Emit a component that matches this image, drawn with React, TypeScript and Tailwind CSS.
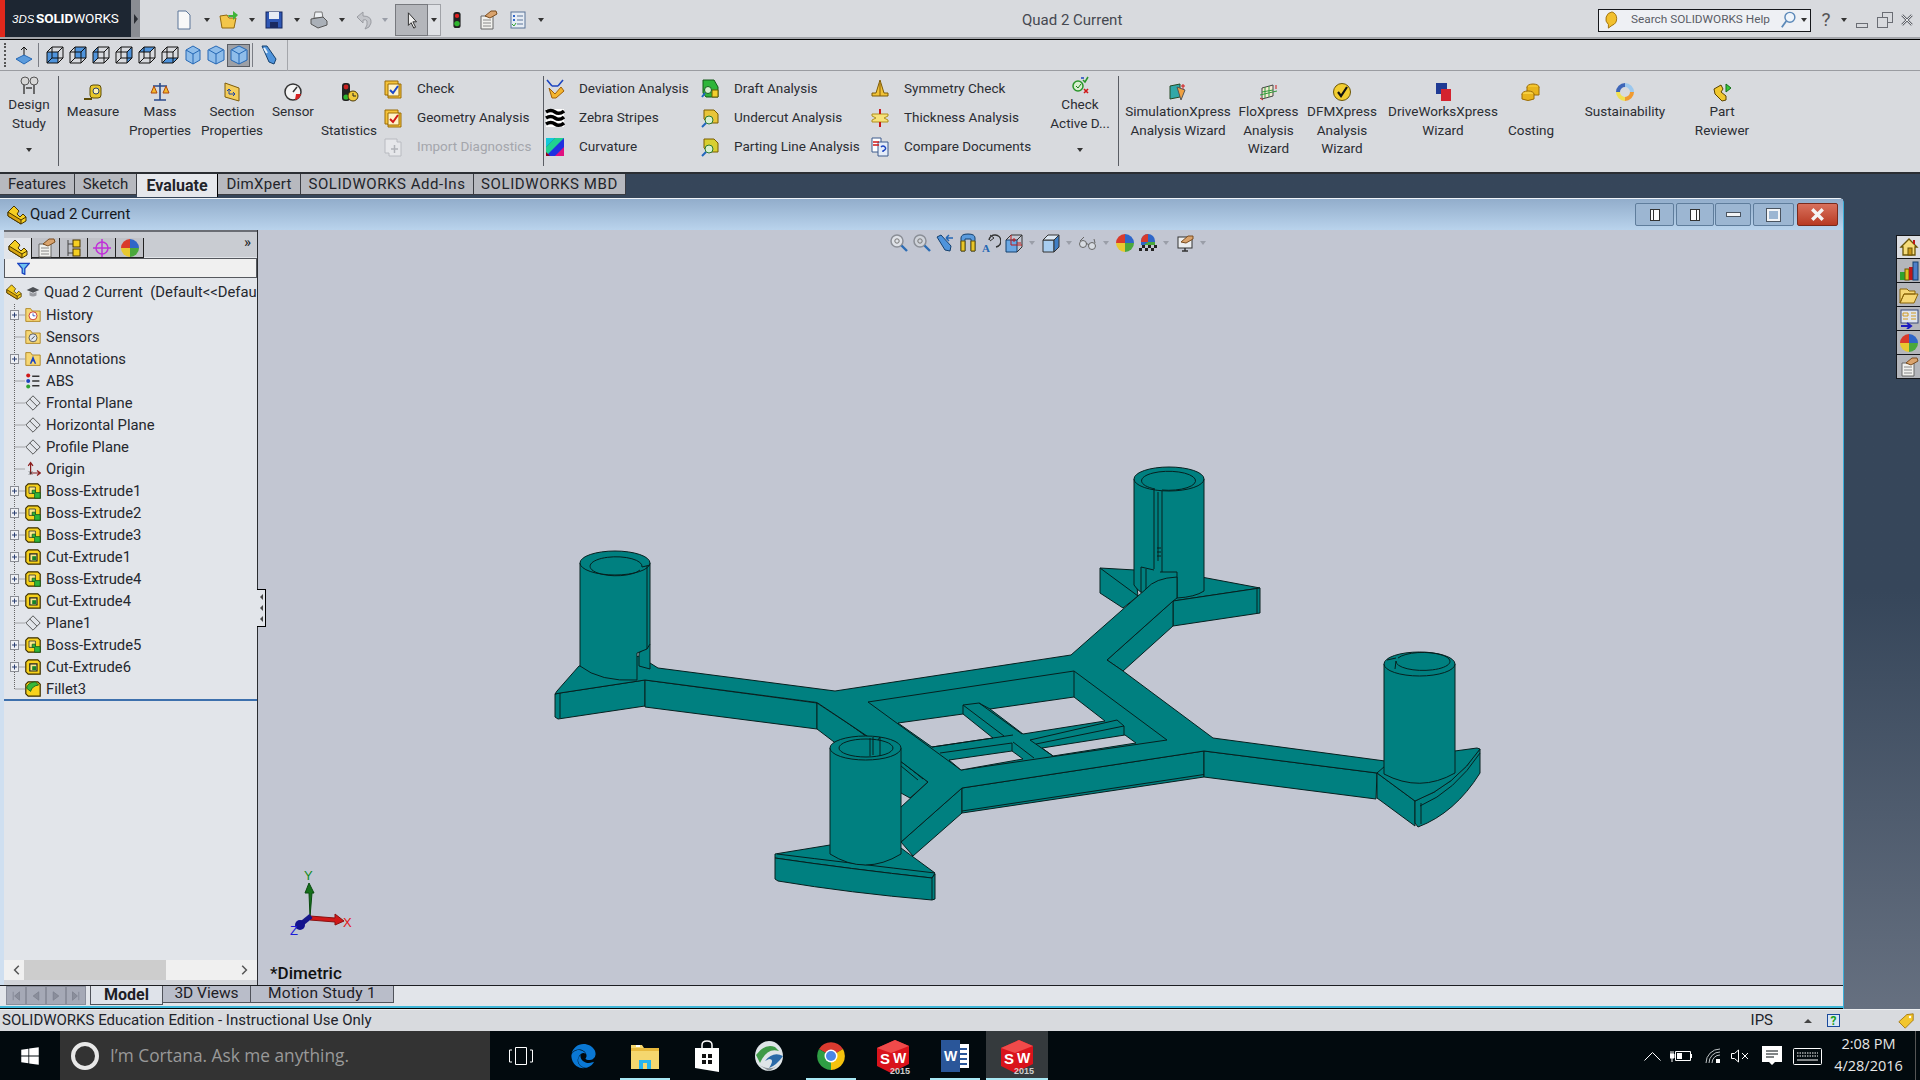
import type { ReactNode } from 'react';
import { FaEdge, FaWindows } from 'react-icons/fa';

const TEAL = '#008080';
const VIEW_BG = '#c2c6d2';

function Svg({ s = 20, children }: { s?: number; children: ReactNode }) {
  return (
    <svg width={s} height={s} viewBox="0 0 20 20" className="shrink-0">
      {children}
    </svg>
  );
}

function Caret({ light }: { light?: boolean }) {
  return (
    <div
      className={
        light
          ? 'w-0 h-0 border-x-[3.5px] border-t-[4px] border-x-transparent border-t-[#9a9ea8]'
          : 'w-0 h-0 border-x-[3.5px] border-t-[4px] border-x-transparent border-t-[#333]'
      }
    />
  );
}

function Ball({ s = 18 }: { s?: number }) {
  return (
    <Svg s={s}>
      <path d="M10 10V1A9 9 0 0 0 1 10Z" fill="#d93a2b" />
      <path d="M10 10V1A9 9 0 0 1 19 10Z" fill="#2f66c8" />
      <path d="M10 10H19A9 9 0 0 1 10 19Z" fill="#4aa83c" />
      <path d="M10 10H1A9 9 0 0 0 10 19Z" fill="#e8c830" />
    </Svg>
  );
}

function Cube({ face }: { face: string }) {
  const faces: Record<string, string> = {
    front: '2,7 13,7 13,18 2,18',
    right: '13,7 18,2 18,13 13,18',
    top: '2,7 7,2 18,2 13,7',
    back: '7,2 18,2 18,13 7,13',
    left: '2,7 7,2 7,13 2,18',
    bottom: '2,18 7,13 18,13 13,18',
  };
  return (
    <Svg>
      <polygon points={faces[face]} fill="#4f94dc" />
      <g fill="none" stroke="#111" strokeWidth="1">
        <path d="M2 7H13V18H2ZM2 7L7 2H18L13 7M18 2V13L13 18M7 2V13H18M7 13L2 18" />
      </g>
    </Svg>
  );
}

function Iso({ narrow }: { narrow?: boolean }) {
  return (
    <Svg>
      <polygon
        points={narrow ? '10,1 17,5 17,15 10,19 3,15 3,5' : '10,1 18,5 18,15 10,19 2,15 2,5'}
        fill="#8fbdea"
        stroke="#2467b4"
      />
      <path d="M3 5L10 9L17 5M10 9V19" stroke="#2467b4" fill="none" />
    </Svg>
  );
}

function FolderIcon({ children }: { children?: ReactNode }) {
  return (
    <Svg s={16}>
      <path d="M1 5V2H7L9 5H19V18H1Z" fill="#f6d774" stroke="#a67a12" />
      {children}
    </Svg>
  );
}

function FeatureIcon({ kind }: { kind: 'boss' | 'cut' | 'fillet' }) {
  return (
    <Svg s={16}>
      <path d="M4 1H16L19 4V19H4L1 16V4Z" fill="#f7d21c" stroke="#3a2c00" strokeWidth="1.5" />
      {kind === 'boss' && (
        <>
          <path d="M5 5H13V13H5Z" fill="#f9e88a" stroke="#333" />
          <path d="M9 9L13 9V12H19V19H12V13H9Z" fill="#2fb53a" stroke="#135a18" />
        </>
      )}
      {kind === 'cut' && (
        <>
          <path d="M6 6H15V15H6Z" fill="#f9e88a" stroke="#222" strokeWidth="1.5" />
          <path d="M9 9H14V14H9Z" fill="#16822a" />
        </>
      )}
      {kind === 'fillet' && <path d="M2 9Q3 2 13 1L17 5Q9 6 7 13Z" fill="#36b83a" stroke="#135a18" />}
    </Svg>
  );
}

function PartIcon({ s = 16 }: { s?: number }) {
  return (
    <Svg s={s}>
      <path d="M1 7L7 1L12 6L10 9L13 12L16 9L19 12V16L14 19L1 11Z" fill="#f5cf22" stroke="#4a3600" />
      <path d="M1 7V11L14 19V15ZM14 15L19 12" fill="#d8a510" stroke="#4a3600" />
    </Svg>
  );
}

function PlaneIcon() {
  return (
    <Svg s={16}>
      <path d="M10 1L19 10L10 19L1 10ZM6 5L15 14" fill="none" stroke="#333" />
    </Svg>
  );
}

function ClipHand({ s = 20 }: { s?: number }) {
  return (
    <Svg s={s}>
      <path d="M3 6H15V19H3Z" fill="#f1f1ee" stroke="#666" />
      <path d="M5 10H13M5 13H13M5 16H13" stroke="#888" />
      <path d="M7 6L13 1H18L19 4L12 8Z" fill="#d9a36d" stroke="#7a4d20" />
    </Svg>
  );
}

function TrafficLight({ s = 18 }: { s?: number }) {
  return (
    <Svg s={s}>
      <rect x="6" y="1" width="8" height="18" rx="3" fill="#222" />
      <circle cx="10" cy="5.5" r="2.4" fill="#e02020" />
      <circle cx="10" cy="14" r="3" fill="#2fb52f" />
    </Svg>
  );
}

function CheckBoxIcon({ color }: { color: string }) {
  return (
    <Svg>
      <path d="M2 2H15V5H18V19H5V16H2Z" fill="#f5c33b" stroke="#9b6c06" />
      <path d="M5 5H16V17H5Z" fill="#fff3c8" stroke="#9b6c06" />
      <path d="M7 11L10 14L15 7" fill="none" stroke={color} strokeWidth="2" />
    </Svg>
  );
}

function Zoomer({ fill }: { fill: string }) {
  return (
    <Svg>
      <circle cx="8" cy="8" r="6" fill={fill} stroke="#8b8f97" strokeWidth="1.5" />
      <circle cx="8" cy="8" r="2.2" fill="none" stroke="#777" />
      <path d="M12.5 12.5L18 18" stroke="#2c6db5" strokeWidth="2.4" />
    </Svg>
  );
}

function Lens({ body }: { body: string }) {
  return (
    <Svg>
      <path d="M4 2H14L18 6V15H8L4 11Z" fill={body} stroke="#7a5c00" />
      <circle cx="9" cy="12" r="4" fill="#d9efd2" stroke="#2c7a2c" />
      <path d="M6 15L2 19" stroke="#2166bd" strokeWidth="2" />
    </Svg>
  );
}

function Wizard({ a, b }: { a: string; b: string }) {
  return (
    <Svg>
      <path d="M2 4L12 2V15L2 17Z" fill={a} stroke="#264a26" />
      <path d="M9 5L17 8L13 18Z" fill={b} stroke="#555" />
      <path d="M15 2V7M13 4H17" stroke="#d01919" />
    </Svg>
  );
}

function SwIcon() {
  return (
    <svg width="40" height="40" viewBox="0 0 40 40">
      <polygon points="4,12 22,4 36,10 36,28 18,37 4,30" fill="#d9131b" />
      <polygon points="4,12 22,4 36,10 18,17" fill="#f04a4a" />
      <text x="7" y="28" fontSize="15" fontWeight="700" fill="#fff" fontFamily="'Liberation Sans',sans-serif">
        S
      </text>
      <text x="20" y="27" fontSize="14" fontWeight="700" fill="#fff" fontFamily="'Liberation Sans',sans-serif">
        W
      </text>
      <text x="17" y="38" fontSize="9" fontWeight="700" fill="#cfcfcf" fontFamily="'Liberation Sans',sans-serif">
        2015
      </text>
    </svg>
  );
}

const ribbonIcons: Record<string, ReactNode> = {
  design: (
    <Svg>
      <circle cx="6" cy="6" r="4" fill="#d8d8d8" stroke="#555" />
      <circle cx="15" cy="6" r="4" fill="#d8d8d8" stroke="#555" />
      <path d="M5 10V19M15 10V19M7 13H13" stroke="#444" strokeWidth="1.5" />
    </Svg>
  ),
  measure: (
    <Svg>
      <rect x="7" y="3" width="11" height="13" rx="3" fill="#e8c62a" stroke="#5d4c06" />
      <circle cx="13" cy="9" r="3" fill="#fff5b8" stroke="#2a3f70" />
      <path d="M1 17H9" stroke="#5d4c06" strokeWidth="2" />
    </Svg>
  ),
  mass: (
    <Svg>
      <path d="M10 1V18M3 4H17M4 18H16" stroke="#2a4a8a" strokeWidth="1.6" />
      <path d="M1 11H7L4 4ZM13 11H19L16 4Z" fill="#f2b92b" stroke="#b0470c" />
    </Svg>
  ),
  section: (
    <Svg>
      <path d="M3 1L17 6V19L3 15Z" fill="#f3cd5c" stroke="#7e5c0a" />
      <path d="M7 7V12H13M7 7L5 9M7 7L9 9M13 12L11 10M13 12L11 14" stroke="#1c44a8" fill="none" />
    </Svg>
  ),
  sensor: (
    <Svg>
      <circle cx="10" cy="10" r="8" fill="#f4f4f4" stroke="#333" strokeWidth="1.5" />
      <path d="M10 10L14 5" stroke="#333" strokeWidth="1.5" />
      <path d="M12 18A8 8 0 0 0 18 12L13 12Z" fill="#d62020" />
    </Svg>
  ),
  statistics: (
    <Svg>
      <rect x="3" y="1" width="8" height="18" rx="3" fill="#222" />
      <circle cx="7" cy="5" r="2.4" fill="#c92020" />
      <circle cx="7" cy="15" r="2.6" fill="#2fb52f" />
      <circle cx="14" cy="14" r="5" fill="#f0c93a" stroke="#4d3a06" />
      <path d="M14 11V14H17" stroke="#222" fill="none" />
    </Svg>
  ),
  checkBlue: <CheckBoxIcon color="#1c48c8" />,
  checkRed: <CheckBoxIcon color="#d01818" />,
  import: (
    <Svg>
      <path d="M2 2H14V5H18V19H6V16H2Z" fill="#e6e7ea" stroke="#b8bac0" />
      <path d="M8 12H15M11.500 8V16" stroke="#b0b2b8" strokeWidth="1.5" />
    </Svg>
  ),
  deviation: (
    <Svg>
      <path d="M4 9L10 15L16 8L19 12L11 19H7Z" fill="#f4b52e" stroke="#a1600a" />
      <path d="M2 1L7 7M18 1L13 7M7 7H13" stroke="#1c44c0" strokeWidth="1.6" />
    </Svg>
  ),
  zebra: (
    <Svg>
      <rect x="1" y="1" width="18" height="18" fill="#fff" />
      <path d="M1 4Q6 1 10 4T19 3M1 10Q6 7 10 10T19 9M1 16Q6 13 10 16T19 15" fill="none" stroke="#000" strokeWidth="3.5" />
    </Svg>
  ),
  curvature: (
    <Svg>
      <rect x="1" y="1" width="18" height="18" fill="#2030e0" />
      <polygon points="1,1 10,1 1,10" fill="#12c8d8" />
      <polygon points="1,10 10,1 19,1 1,19" fill="#20d090" />
      <polygon points="10,19 19,10 19,19" fill="#e01080" />
      <polygon points="1,19 1,15 5,19" fill="#900020" />
    </Svg>
  ),
  draft: (
    <Svg>
      <path d="M3 1H14L18 8V18H6L3 14Z" fill="#2fb53a" stroke="#145a18" />
      <path d="M12 11H18V18H12Z" fill="#f3d02d" stroke="#6d5a00" />
      <circle cx="8" cy="11" r="3.5" fill="#d9efd2" stroke="#14601e" />
      <path d="M5 14L2 18" stroke="#2166bd" strokeWidth="2" />
    </Svg>
  ),
  undercut: <Lens body="#e8c53a" />,
  parting: <Lens body="#d8cf30" />,
  symmetry: (
    <Svg>
      <path d="M10 1L14 14H18V17H2V14H6Z" fill="#f0c237" stroke="#7d5a06" />
      <path d="M10 4V17" stroke="#8a5a06" />
    </Svg>
  ),
  thickness: (
    <Svg>
      <path d="M2 6H18V8L14 10L18 12V14H2V12L6 10L2 8Z" fill="#f6e27a" stroke="#b0901c" />
      <path d="M10 1V6M10 19V14" stroke="#c81818" strokeWidth="2" />
    </Svg>
  ),
  compare: (
    <Svg>
      <path d="M2 1H11V15H2Z" fill="#fff" stroke="#3c5a8c" />
      <path d="M8 5H18V19H8Z" fill="#e4ecf8" stroke="#3c5a8c" />
      <path d="M3 5H9M3 8H9" stroke="#d01818" strokeWidth="1.6" />
      <path d="M11 10Q13 8 15 10T13 14V15" fill="none" stroke="#1c44c0" strokeWidth="1.5" />
    </Svg>
  ),
  checkActive: (
    <Svg>
      <circle cx="8" cy="11" r="5" fill="#d9f0d0" stroke="#2a962a" strokeWidth="1.5" />
      <path d="M6 11L8 13L11 9" fill="none" stroke="#1c7a1c" />
      <path d="M13 5L15 7L18 2" fill="none" stroke="#2a962a" strokeWidth="1.5" />
      <path d="M14 14L18 18M18 14L14 18" stroke="#d01818" strokeWidth="1.6" />
      <path d="M11 3H14" stroke="#1c44c0" strokeWidth="1.5" />
    </Svg>
  ),
  simulation: <Wizard a="#32a8a8" b="#f0a040" />,
  flo: (
    <Svg>
      <path d="M3 6L14 3V14L3 17Z" fill="#f2ead0" stroke="#444" />
      <path d="M6 5V16M10 4V15M3 10L14 8M1 13L18 9" stroke="#2f9a3a" />
      <path d="M17 3V7M1 16L4 18" stroke="#d01818" />
    </Svg>
  ),
  dfm: (
    <Svg>
      <circle cx="10" cy="10" r="8.500" fill="#f2cd30" stroke="#6b5507" />
      <path d="M6 10L9 14L15 5" fill="none" stroke="#111" strokeWidth="2.2" />
    </Svg>
  ),
  drive: (
    <Svg>
      <rect x="3" y="1" width="11" height="11" fill="#1f3a94" />
      <rect x="8" y="7" width="10" height="12" fill="#d4232f" />
    </Svg>
  ),
  costing: (
    <Svg>
      <ellipse cx="12" cy="5" rx="6" ry="3" fill="#f4c52c" stroke="#9b6c06" />
      <path d="M6 5V13H18V5" fill="#e8b41c" stroke="#9b6c06" />
      <ellipse cx="7" cy="12" rx="6" ry="3" fill="#f6cf40" stroke="#9b6c06" />
      <path d="M1 12V17Q7 20 13 17V12" fill="#e8b41c" stroke="#9b6c06" />
    </Svg>
  ),
  sustain: (
    <Svg>
      <path d="M10 1A9 9 0 0 0 1 10H5A5 5 0 0 1 10 5Z" fill="#3e66b8" />
      <path d="M10 1A9 9 0 0 1 19 10H15A5 5 0 0 0 10 5Z" fill="#9cc8ee" />
      <path d="M19 10A9 9 0 0 1 10 19V15A5 5 0 0 0 15 10Z" fill="#f09a30" />
      <path d="M10 19A9 9 0 0 1 1 10H5A5 5 0 0 0 10 15Z" fill="#f0e050" />
    </Svg>
  ),
  part: (
    <Svg>
      <path d="M2 7L9 3L11 7L9 10L14 14V18L10 19L3 12Z" fill="#f0c72e" stroke="#5a4300" />
      <path d="M14 2V10L19 6Z" fill="#36c83a" stroke="#146a18" />
    </Svg>
  ),
};

const bigToolsA = [
  { w: 'w-[68px]', icon: 'measure', lines: ['Measure'] },
  { w: 'w-[66px]', icon: 'mass', lines: ['Mass', 'Properties'] },
  { w: 'w-[78px]', icon: 'section', lines: ['Section', 'Properties'] },
  { w: 'w-[44px]', icon: 'sensor', lines: ['Sensor'] },
  { w: 'w-[68px]', icon: 'statistics', lines: ['', 'Statistics'] },
];

const bigToolsB = [
  { w: 'w-[118px]', icon: 'simulation', lines: ['SimulationXpress', 'Analysis Wizard'] },
  { w: 'w-[63px]', icon: 'flo', lines: ['FloXpress', 'Analysis', 'Wizard'] },
  { w: 'w-[84px]', icon: 'dfm', lines: ['DFMXpress', 'Analysis', 'Wizard'] },
  { w: 'w-[118px]', icon: 'drive', lines: ['DriveWorksXpress', 'Wizard'] },
  { w: 'w-[58px]', icon: 'costing', lines: ['', 'Costing'] },
  { w: 'w-[130px]', icon: 'sustain', lines: ['Sustainability'] },
  { w: 'w-[64px]', icon: 'part', lines: ['Part', 'Reviewer'] },
];

const listGroups = [
  {
    w: 'w-[155px]',
    rows: [
      { icon: 'deviation', label: 'Deviation Analysis' },
      { icon: 'zebra', label: 'Zebra Stripes' },
      { icon: 'curvature', label: 'Curvature' },
    ],
  },
  {
    w: 'w-[170px]',
    rows: [
      { icon: 'draft', label: 'Draft Analysis' },
      { icon: 'undercut', label: 'Undercut Analysis' },
      { icon: 'parting', label: 'Parting Line Analysis' },
    ],
  },
  {
    w: 'w-[172px]',
    rows: [
      { icon: 'symmetry', label: 'Symmetry Check' },
      { icon: 'thickness', label: 'Thickness Analysis' },
      { icon: 'compare', label: 'Compare Documents' },
    ],
  },
];

function BigTool({ w, icon, lines }: { w: string; icon: string; lines: string[] }) {
  return (
    <div className={`${w} shrink-0 flex flex-col items-center pt-[11px] text-center`}>
      {ribbonIcons[icon]}
      {lines.map((line, i) => (
        <div key={i} className="h-[18.5px] leading-[18.5px] whitespace-nowrap">
          {line || '\u00a0'}
        </div>
      ))}
    </div>
  );
}

function DropTool({ w, icon, lines }: { w: string; icon: string; lines: string[] }) {
  return (
    <div className={`${w} shrink-0 flex flex-col items-center pt-[4px] text-center`}>
      {ribbonIcons[icon]}
      {lines.map((line) => (
        <div key={line} className="h-[19px] leading-[19px] whitespace-nowrap">
          {line}
        </div>
      ))}
      <div className="mt-[15px]">
        <Caret />
      </div>
    </div>
  );
}

function ListRow({ icon, label, off }: { icon: string; label: string; off?: boolean }) {
  return (
    <div className={off ? 'h-[29px] flex items-center gap-[14px] text-[#a4a6ac]' : 'h-[29px] flex items-center gap-[14px]'}>
      {ribbonIcons[icon]}
      <span className="whitespace-nowrap">{label}</span>
    </div>
  );
}

function RibbonSep() {
  return <div className="w-px h-[90px] mt-[5px] bg-[#5a5d64] shrink-0" />;
}

function QuickSlot({ children, w = 'w-[22.5px]' }: { children: ReactNode; w?: string }) {
  return <div className={`${w} h-[32px] flex items-center justify-center shrink-0`}>{children}</div>;
}

function TitleBar() {
  return (
    <div className="h-[40px] shrink-0 flex flex-col">
      <div className="h-[39px] flex bg-[#d8dade] border-b-2 border-b-[#a4a6ab]">
        <div className="w-[140px] h-[37px] flex shrink-0">
          <div className="w-[5px] bg-[#e0281c]" />
          <div className="w-[126px] bg-[#1d2632] flex items-center text-white pl-[7px] gap-[2px]">
            <svg width="22" height="26" viewBox="0 0 22 26">
              <text x="0" y="17" fontSize="11.5" fontStyle="italic" fill="#fff" fontFamily="'Liberation Sans',sans-serif">
                3DS
              </text>
            </svg>
            <span className="text-[13.5px] tracking-[-0.1px] whitespace-nowrap">
              <b>SOLID</b>WORKS
            </span>
          </div>
          <div className="w-[9px] bg-[#8a8d93] flex items-center justify-center">
            <div className="w-0 h-0 border-y-[5px] border-l-[4px] border-y-transparent border-l-[#2a2d33]" />
          </div>
        </div>
        <div className="ml-[33px] flex items-center h-[37px] pt-[3px]">
          <QuickSlot><Svg><path d="M4 1H12L16 5V19H4Z" fill="#f8f8f8" stroke="#5b7598" /></Svg></QuickSlot>
          <QuickSlot><Caret /></QuickSlot>
          <QuickSlot>
            <Svg>
              <path d="M1 6L8 5L10 8H17L15 18H3Z" fill="#f3c64a" stroke="#92690e" />
              <path d="M9 5H14V1L19 5L14 10V7H10Z" fill="#3fb53a" />
            </Svg>
          </QuickSlot>
          <QuickSlot><Caret /></QuickSlot>
          <QuickSlot>
            <Svg>
              <rect x="2" y="2" width="16" height="16" fill="#2f57b4" stroke="#14265e" />
              <rect x="5" y="2" width="10" height="7" fill="#e8ecf4" />
              <rect x="6" y="12" width="8" height="6" fill="#1a2a60" />
            </Svg>
          </QuickSlot>
          <QuickSlot><Caret /></QuickSlot>
          <QuickSlot>
            <Svg>
              <path d="M6 2L13 2L14 8H5Z" fill="#eef1f4" stroke="#777" />
              <path d="M2 9L14 7L18 11V15L9 18L2 14Z" fill="#aab0b8" stroke="#555" />
            </Svg>
          </QuickSlot>
          <QuickSlot><Caret /></QuickSlot>
          <QuickSlot>
            <Svg><path d="M3 7L9 2V6Q18 6 17 13Q16 18 11 19Q14 15 13 11Q12 9 9 10V13Z" fill="#c3c5ca" stroke="#9a9ca2" /></Svg>
          </QuickSlot>
          <QuickSlot w="w-[19.5px]"><Caret light /></QuickSlot>
          <div className="w-[33px] h-[32px] bg-[#b4b6bb] border border-[#77797e] flex items-center justify-center">
            <Svg s={18}><path d="M6 2V16L9 13L12 19L14 18L11 12H15Z" fill="#eee" stroke="#222" /></Svg>
          </div>
          <div className="w-[13px] h-[32px] border border-l-0 border-[#a0a2a7] bg-[#dfe1e5] flex items-center justify-center">
            <Caret />
          </div>
          <div className="w-[5px]" />
          <QuickSlot><TrafficLight /></QuickSlot>
          <div className="w-[8px]" />
          <QuickSlot><ClipHand /></QuickSlot>
          <div className="w-[8px]" />
          <QuickSlot>
            <Svg>
              <rect x="3" y="2" width="14" height="16" fill="#e6ecf4" stroke="#5b7598" />
              <path d="M9 6H15M9 10H15M9 14H15" stroke="#5b7598" />
              <path d="M5 6H7M5 10H7" stroke="#2f66c8" strokeWidth="2" />
              <path d="M4 14L6 16L8 13" stroke="#2fa32f" fill="none" />
            </Svg>
          </QuickSlot>
          <QuickSlot><Caret /></QuickSlot>
        </div>
        <div className="ml-[470px] h-[37px] pt-[3px] flex items-center text-[#454850] whitespace-nowrap">Quad 2 Current</div>
        <div className="ml-auto flex items-center h-[37px] pt-[3px]">
          <div className="w-[213px] h-[23px] border border-[#15171b] bg-[#eef0f4] flex items-center pl-[4px] text-[11.8px] text-[#5a5d66]">
            <Svg s={18}>
              <path d="M10 1A8 8 0 0 1 10 16L6 19V15A8 8 0 0 1 10 1Z" fill="#f2c02e" stroke="#9b6c06" />
            </Svg>
            <span className="ml-[10px] whitespace-nowrap">Search SOLIDWORKS Help</span>
            <div className="ml-auto flex items-center gap-[3px] pr-[3px]">
              <Svg s={18}>
                <circle cx="11" cy="7" r="5.500" fill="#eef4fb" stroke="#5b88b8" strokeWidth="1.6" />
                <path d="M7 11L2 18" stroke="#5b88b8" strokeWidth="2" />
              </Svg>
              <Caret />
            </div>
          </div>
          <div className="w-[30px] flex justify-center text-[19px] text-[#555]">?</div>
          <Caret />
          <div className="w-[30px] flex justify-center">
            <div className="w-[12px] h-[5px] mt-[10px] border border-[#6a6d74]" />
          </div>
          <div className="w-[16px] h-[16px] relative">
            <div className="absolute right-0 top-0 w-[11px] h-[11px] border border-[#6a6d74]" />
            <div className="absolute left-0 bottom-0 w-[11px] h-[11px] border border-[#6a6d74] bg-[#d8dade]" />
          </div>
          <div className="w-[27px] flex justify-center">
            <Svg s={14}><path d="M3 3L17 17M17 3L3 17" stroke="#5f6269" strokeWidth="3.4" /><path d="M3 3L17 17M17 3L3 17" stroke="#eceef0" strokeWidth="1.4" /></Svg>
          </div>
        </div>
      </div>
      <div className="h-px bg-black" />
    </div>
  );
}

function ViewBar() {
  const faces = ['front', 'back', 'left', 'right', 'top', 'bottom'];
  return (
    <div className="h-[31px] shrink-0 flex items-center bg-[#d8dade] border-b border-b-[#9a9ca1]">
      <div className="ml-[4px] h-[24px] w-[2px] border-l-2 border-dotted border-[#555]" />
      <div className="ml-[7px] w-[22px] flex justify-center">
        <Svg>
          <path d="M10 2V12M7 5L10 2L13 5" stroke="#111" fill="none" />
          <path d="M10 10L18 14L10 19L2 14Z" fill="#5b9bdc" stroke="#2467b4" />
        </Svg>
      </div>
      <div className="ml-[3px] mr-[4px] w-px h-[24px] bg-[#7a7d84]" />
      {faces.map((f) => (
        <div key={f} className="w-[23px] flex justify-center">
          <Cube face={f} />
        </div>
      ))}
      <div className="w-[23px] flex justify-center"><Iso narrow /></div>
      <div className="w-[23px] flex justify-center"><Iso /></div>
      <div className="w-[23px] h-[23px] flex items-center justify-center bg-[#9da0a6] border border-[#5a5d63]"><Iso /></div>
      <div className="ml-[2px] w-px h-[24px] bg-[#7a7d84]" />
      <div className="ml-[5px] w-[20px] flex justify-center">
        <Svg>
          <path d="M4 1L9 1L18 14L16 19L11 17Z" fill="#4f94dc" stroke="#14406e" />
          <path d="M6 3L9 8" stroke="#e8f2fc" strokeWidth="2" />
        </Svg>
      </div>
      <div className="ml-[9px] w-px h-[31px] bg-[#a4a6ab]" />
    </div>
  );
}

function Ribbon() {
  return (
    <div className="h-[103px] shrink-0 flex bg-[#d8dade] border-b-2 border-b-[#2b2e33] text-[13.5px] text-[#2b2d33]">
      <div className="flex w-[58px] shrink-0 justify-center">
        <DropTool w="w-[60px]" icon="design" lines={['Design', 'Study']} />
      </div>
      <RibbonSep />
      {bigToolsA.map((t) => (
        <BigTool key={t.icon} {...t} />
      ))}
      <div className="w-[160px] shrink-0 pt-[3px]">
        <ListRow icon="checkBlue" label="Check" />
        <ListRow icon="checkRed" label="Geometry Analysis" />
        <ListRow icon="import" label="Import Diagnostics" off />
      </div>
      <RibbonSep />
      <div className="w-[1px]" />
      {listGroups.map((g) => (
        <div key={g.w} className={`${g.w} shrink-0 pt-[3px]`}>
          {g.rows.map((r) => (
            <ListRow key={r.label} {...r} />
          ))}
        </div>
      ))}
      <DropTool w="w-[76px]" icon="checkActive" lines={['Check', 'Active D...']} />
      <RibbonSep />
      {bigToolsB.map((t) => (
        <BigTool key={t.icon} {...t} />
      ))}
    </div>
  );
}

function CommandTabs() {
  const tabs = [
    { label: 'Features', cls: 'w-[75px]' },
    { label: 'Sketch', cls: 'w-[62px]' },
    { label: 'Evaluate', cls: 'w-[81px]' },
    { label: 'DimXpert', cls: 'w-[83px] tracking-[0.3px]' },
    { label: 'SOLIDWORKS Add-Ins', cls: 'w-[173px] tracking-[0.55px]' },
    { label: 'SOLIDWORKS MBD', cls: 'w-[152px] tracking-[0.6px]' },
  ];
  return (
    <div className="h-[24px] shrink-0 flex items-start text-[15px] text-[#22242a]">
      {tabs.map((tab) =>
        tab.label === 'Evaluate' ? (
          <div key={tab.label} className={`${tab.cls} h-[23px] bg-[#e6e8ec] flex items-center justify-center font-bold text-[16px] border-r border-black`}>
            {tab.label}
          </div>
        ) : (
          <div key={tab.label} className={`${tab.cls} h-[21px] bg-[#b7b9bf] flex items-center justify-center border-r border-b border-[#3a3c42] whitespace-nowrap`}>
            {tab.label}
          </div>
        ),
      )}
    </div>
  );
}

const treeRows = [
  { label: 'History', plus: true, icon: <FolderIcon><circle cx="10" cy="11" r="5" fill="#fff" stroke="#c01818" /><path d="M10 8V11H13" stroke="#1c44c0" fill="none" /></FolderIcon> },
  { label: 'Sensors', icon: <FolderIcon><circle cx="10" cy="11" r="5" fill="#dfe6f0" stroke="#444" /><path d="M8 13L12 9" stroke="#222" /></FolderIcon> },
  { label: 'Annotations', plus: true, icon: <FolderIcon><path d="M10 6L14 16H12L11 13H9L8 16H6Z" fill="#1c44c0" /></FolderIcon> },
  {
    label: 'ABS',
    icon: (
      <Svg s={16}>
        <circle cx="4" cy="3" r="2.500" fill="#d01818" />
        <circle cx="4" cy="10" r="2.500" fill="#1c44c0" />
        <circle cx="4" cy="17" r="2.500" fill="#2fa32f" />
        <path d="M9 4H18M9 10H18M9 16H18" stroke="#333" strokeWidth="2" />
      </Svg>
    ),
  },
  { label: 'Frontal Plane', icon: <PlaneIcon /> },
  { label: 'Horizontal Plane', icon: <PlaneIcon /> },
  { label: 'Profile Plane', icon: <PlaneIcon /> },
  {
    label: 'Origin',
    icon: (
      <Svg s={16}>
        <path d="M7 17V3M4 6L7 2L10 6M7 15H18M15 12L19 15L15 18" fill="none" stroke="#8a1c1c" strokeWidth="1.5" />
        <path d="M5 13L9 17M9 13L5 17" stroke="#333" />
      </Svg>
    ),
  },
  { label: 'Boss-Extrude1', plus: true, icon: <FeatureIcon kind="boss" /> },
  { label: 'Boss-Extrude2', plus: true, icon: <FeatureIcon kind="boss" /> },
  { label: 'Boss-Extrude3', plus: true, icon: <FeatureIcon kind="boss" /> },
  { label: 'Cut-Extrude1', plus: true, icon: <FeatureIcon kind="cut" /> },
  { label: 'Boss-Extrude4', plus: true, icon: <FeatureIcon kind="boss" /> },
  { label: 'Cut-Extrude4', plus: true, icon: <FeatureIcon kind="cut" /> },
  { label: 'Plane1', icon: <PlaneIcon /> },
  { label: 'Boss-Extrude5', plus: true, icon: <FeatureIcon kind="boss" /> },
  { label: 'Cut-Extrude6', plus: true, icon: <FeatureIcon kind="cut" /> },
  { label: 'Fillet3', last: true, icon: <FeatureIcon kind="fillet" /> },
];

function TreeRow({ label, icon, plus, last }: { label: string; icon: ReactNode; plus?: boolean; last?: boolean }) {
  return (
    <div className="h-[22px] flex items-center">
      <svg width="21" height="22" viewBox="0 0 21 22" className="shrink-0">
        <path d={last ? 'M10.5 0V11H21' : 'M10.5 0V22M10.5 11H21'} fill="none" stroke="#666" strokeDasharray="1 1" />
        {plus && (
          <>
            <rect x="6.500" y="6.500" width="8" height="9" fill="#eef0f4" stroke="#8a8d94" />
            <path d="M8 11H13M10.500 8.500V13.500" stroke="#2a3f70" />
          </>
        )}
      </svg>
      {icon}
      <span className="ml-[5px] whitespace-nowrap">{label}</span>
    </div>
  );
}

function FeaturePanel() {
  const tabs = [
    <PartIcon key="a" s={20} />,
    <ClipHand key="b" s={20} />,
    <Svg key="c"><path d="M4 2V18M4 6H9M4 15H9" stroke="#444" /><rect x="9" y="2" width="7" height="7" fill="#f5cf22" stroke="#4a3600" /><rect x="9" y="11" width="7" height="7" fill="#f5cf22" stroke="#4a3600" /></Svg>,
    <Svg key="d"><circle cx="10" cy="10" r="6" fill="none" stroke="#c030d8" strokeWidth="1.5" /><path d="M10 1V19M1 10H19" stroke="#c030d8" strokeWidth="1.5" /></Svg>,
    <Ball key="e" s={20} />,
  ];
  return (
    <div className="w-[254px] shrink-0 flex flex-col bg-[#e2e5ea] border-r border-r-[#2a2c30] text-[14.8px] text-[#25282e] overflow-hidden">
      <div className="h-[27px] shrink-0 pt-[6px] flex items-start bg-[#c9ccd2] border-t-2 border-[#6a6d74] relative text-[#222]">
        <div className="flex h-[20px]">
          {tabs.map((t, i) => (
            <div key={i} className={i === 0 ? 'w-[28px] h-[21px] bg-[#e2e5ea] border-r border-r-[#222] flex items-center justify-center' : 'w-[28px] h-[20px] bg-[#c0c2c8] border-r border-r-[#222] border-b border-b-[#222] flex items-center justify-center'}>
              {t}
            </div>
          ))}
        </div>
        <span className="absolute right-[6px] top-[-1px] text-[15px]">»</span>
      </div>
      <div className="h-[20px] shrink-0 mt-[1px] bg-[#f0f0f0] border border-[#55585e] flex items-center pl-[12px]">
        <Svg s={13}><path d="M1 2H19L12 10V19L8 17V10Z" fill="#6fc3f0" stroke="#1c44c0" strokeWidth="2" /></Svg>
      </div>
      <div className="h-[26px] pt-[2px] flex items-center pl-[2px] whitespace-nowrap">
        <PartIcon />
        <div className="ml-[4px]">
          <Svg s={14}>
            <path d="M1 7L10 3L19 7L10 11Z" fill="#4d5055" />
            <path d="M5 10V15Q10 18 15 15V10L10 12Z" fill="#9a9ca2" />
          </Svg>
        </div>
        <span className="ml-[4px] whitespace-pre">Quad 2 Current  (Default&lt;&lt;Default&gt;_Display State 1&gt;)</span>
      </div>
      {treeRows.map((row) => (
        <TreeRow key={row.label} {...row} />
      ))}
      <div className="-mt-px h-[2px] bg-[#3d70ad] shrink-0" />
      <div className="flex-1" />
      <div className="h-[20px] shrink-0 bg-[#f0f0f0] flex items-center justify-between px-[7px] relative text-[#555]">
        <div className="absolute left-[20px] top-0 h-[20px] w-[142px] bg-[#cdcdcd]" />
        <Svg s={12}><path d="M13 3L6 10L13 17" fill="none" stroke="#555" strokeWidth="2.5" /></Svg>
        <Svg s={12}><path d="M7 3L14 10L7 17" fill="none" stroke="#555" strokeWidth="2.5" /></Svg>
      </div>
      <div className="h-[5px] shrink-0 bg-[#d3d5da]" />
    </div>
  );
}

function ViewToolbar() {
  const Slot = ({ children }: { children: ReactNode }) => <div className="w-[23px] flex justify-center">{children}</div>;
  const CaretSlot = () => (
    <div className="w-[14px] flex justify-center">
      <Caret light />
    </div>
  );
  return (
    <div className="absolute left-[629px] top-[2px] h-[22px] flex items-center">
      <Slot><Zoomer fill="#dfe2e8" /></Slot>
      <Slot><Zoomer fill="#cfd3da" /></Slot>
      <Slot>
        <Svg>
          <path d="M2 4L6 2L16 13L15 18L10 17Z" fill="#4f94dc" stroke="#14406e" />
          <path d="M11 5H18M11 5L14 2M11 5L14 8" stroke="#2467b4" fill="none" strokeWidth="1.5" />
        </Svg>
      </Slot>
      <Slot>
        <Svg>
          <path d="M3 18V5Q3 1 10 1Q17 1 17 5V18H13V6H7V18Z" fill="#5b9bdc" stroke="#14406e" />
          <path d="M3 8H7V18H3ZM13 8H17V18H13Z" fill="#e8c62a" stroke="#6b5507" />
        </Svg>
      </Slot>
      <Slot>
        <Svg>
          <path d="M8 7A6 6 0 1 1 15 14" fill="none" stroke="#333" strokeWidth="1.5" />
          <path d="M9 2L13 5L9 8" fill="none" stroke="#333" />
          <text x="1" y="19" fontSize="11" fontWeight="700" fill="#2467b4" fontFamily="'Liberation Serif',serif">A</text>
        </Svg>
      </Slot>
      <Slot>
        <Svg>
          <path d="M2 7H13V19H2Z" fill="#6aa8e4" stroke="#14406e" />
          <path d="M2 7L7 2H18L13 7M18 2V14L13 19" fill="none" stroke="#333" />
          <path d="M7 2V12H18M10 5V9M8 7H12M13 10H17" stroke="#c01818" fill="none" />
        </Svg>
      </Slot>
      <CaretSlot />
      <Slot>
        <Svg>
          <path d="M2 7H13V19H2Z" fill="#a8cdf0" stroke="#333" />
          <path d="M2 7L7 2H18L13 7Z" fill="#dce8f4" stroke="#333" />
          <path d="M13 7L18 2V14L13 19Z" fill="#3f7ec4" stroke="#333" />
        </Svg>
      </Slot>
      <CaretSlot />
      <Slot>
        <Svg>
          <circle cx="5" cy="11" r="3.500" fill="#d8dce2" stroke="#666" />
          <circle cx="14" cy="13" r="3.500" fill="#d8dce2" stroke="#666" />
          <path d="M8 10L11 12M2 8L6 4M17 10L16 6" stroke="#666" fill="none" />
        </Svg>
      </Slot>
      <CaretSlot />
      <Slot><Ball s={20} /></Slot>
      <Slot>
        <Svg>
          <path d="M10 1A7 7 0 0 0 3 8V12H17V8A7 7 0 0 0 10 1Z" fill="#2f66c8" />
          <path d="M10 1A7 7 0 0 0 3 8V9H10Z" fill="#d93a2b" />
          <path d="M10 9H17V12H6Z" fill="#4aa83c" />
          <path d="M1 15H4V18H1ZM7 15H10V18H7ZM13 15H16V18H13ZM4 12H7V15H4ZM10 12H13V15H10ZM16 12H19V15H16Z" fill="#222" />
        </Svg>
      </Slot>
      <CaretSlot />
      <Slot>
        <Svg>
          <rect x="3" y="4" width="14" height="11" fill="#eceef0" stroke="#333" />
          <path d="M7 18H13M10 15V18" stroke="#333" strokeWidth="1.5" />
          <path d="M6 9L13 3H18L18 6L11 10Z" fill="#d9a36d" stroke="#7a4d20" />
        </Svg>
      </Slot>
      <CaretSlot />
    </div>
  );
}

function Model() {
  return (
    <svg width="1585" height="755" viewBox="258 229 1585 755" className="absolute left-0 top-0">
      <g fill={TEAL} stroke="#06201f" strokeWidth="1" strokeLinejoin="round">
        {/* far plate */}
        <polygon points="1100,567 1135,569 1138,595 1123,607 1100,592" />
        <path d="M1100,567L1138,595" fill="none" />
        <polygon points="1180,572 1260,587 1173,600" />
        <polygon points="1173,600 1260,587 1260,612 1173,625" />
        <path d="M1257,588V612" fill="none" />
        <polygon points="1107,659 1173,600 1173,625 1123,670" />

        {/* far boss */}
        <path d="M1134,478V584Q1140,593 1146,592L1177,597Q1195,596 1204,590V478Z" />
        <ellipse cx="1169" cy="478" rx="35" ry="12" />
        <path d="M1155,488A27,9.500 0 1 1 1162,489" fill="none" />
        <path d="M1154,488V568M1158,491V560M1162,490V571M1160,571H1177V597M1141,566V592M1146,568V591M1141,566L1154,569" fill="none" />
        <path d="M1157,547H1161M1157,551H1161M1157,555H1161" fill="none" />

        {/* left plate front and arm walls */}
        <polygon points="555,693 555,716 558,718 645,705 645,679 560,692" />
        <path d="M560,692V717" fill="none" />
        <polygon points="645,679 645,706 817,728 817,702" />
        <polygon points="817,702 817,728 901,792 910,797 928,781 867,735" />
        <path d="M822,703L867,736M901,760L923,778M901,765L918,779" fill="none" />
        <polygon points="962,787 962,812 913,855 901,841" />
        <polygon points="962,787 1204,750 1204,776 962,812" />
        <path d="M962,810L1204,773.500" fill="none" />
        <polygon points="1204,750 1377,772 1376,798 1204,776" />

        {/* frame top face */}
        <path d="M579,665L557,690L555,693L560,692L645,679L817,701.500L867,735L928,781L901,806L860,850L901,841L962,787L1204,750L1377,772L1400,775L1400,765L1385,760L1213,737L1123,670L1107,659L1173,600L1177,597V576Q1155,577 1146,588L1138,595L1071,654L835,690L658,667L650,662L640,655Z" />

        {/* frame recess */}
        <path d="M868,701L1074,670L1167,739L961,769Z" fill="none" />
        <path d="M1074,670V696" fill="none" />
        <g fill={VIEW_BG}>
          <polygon points="898,722 963,713 993,737 932,746" />
          <polygon points="990,708 1074,696 1105,720 1023,733" />
          <polygon points="949,759 1012,750 1023,758 961,769" />
          <polygon points="1042,747 1125,734 1136,742 1053,755" />
        </g>
        <path d="M963,713V704L979,702L990,708M963,704L1004,735M979,702L1022,733M932,746L1013,734M940,752L1012,742V750M1013,741L1034,757M1030,739L1117,719L1124,725V734M1030,739L1053,755M1036,743L1124,725" fill="none" />

        {/* near-left boss */}
        <polygon points="639,652 639,665 650,668 650,643" />
        <path d="M580,562V665Q600,681 637,679V652L647,648L650,643V562Z" />
        <ellipse cx="615" cy="562" rx="35" ry="12" />
        <path d="M642,566A26,9.500 0 1 0 640,569" fill="none" />
        <path d="M642,566L650,564M647,565V648" fill="none" />

        {/* right plate */}
        <polygon points="1377,772 1377,797 1415,825 1415,800" />
        <path d="M1415,800V822L1418,826Q1455,812 1480,772V748Q1455,785 1415,800Z" />
        <path d="M1377,772L1415,800Q1455,785 1480,748L1477,747L1440,752L1385,765Z" />
        <path d="M1421,802V823M1420,805Q1455,790 1480,752" fill="none" />

        {/* right boss */}
        <path d="M1384,663V773Q1420,792 1455,772V663Z" />
        <ellipse cx="1419.500" cy="663" rx="35.500" ry="12" />
        <path d="M1396,660A27,9 0 1 0 1398,657" fill="none" />
        <path d="M1387,659L1396,657M1396,660L1395,668" fill="none" />

        {/* front plate */}
        <path d="M775,853L830,844L901,847L935,872L932,877Q850,868 775,857Z" />
        <path d="M775,857V878L778,880Q850,892 932,899L935,898V873L932,877Q850,868 775,857Z" />
        <path d="M777,853Q850,862 935,872M932,877V899" fill="none" />

        {/* front boss */}
        <path d="M830,747V853Q865,875 901,853V747Z" />
        <ellipse cx="865.500" cy="747" rx="35.500" ry="12" />
        <ellipse cx="866" cy="747" rx="27" ry="9" />
        <path d="M870,737V755M873,736V754M878,739L880,736V755" fill="none" />
      </g>

      {/* triad */}
      <polygon points="310,916 309,892 305,892 309,882 314,892 312,892" fill="#14701a" stroke="#0a4a10" />
      <polygon points="310,915 335,917 335,913 344,920 335,924 335,921 310,919" fill="#d01818" stroke="#8a1010" />
      <path d="M311,915L300,924" stroke="#16168a" strokeWidth="5" />
      <circle cx="300" cy="924" r="5" fill="#12128e" />
      <g fontFamily="'Liberation Sans',sans-serif" fontSize="13">
        <text x="304" y="879" fill="#128a1c">Y</text>
        <text x="343" y="926" fill="#e01818">X</text>
        <text x="290" y="934" fill="#1c1cd8">Z</text>
      </g>
    </svg>
  );
}

function Viewport() {
  return (
    <div className="flex-1 relative bg-[#c2c6d2] overflow-hidden">
      <Model />
      <ViewToolbar />
      <span className="absolute left-[12px] bottom-[1px] text-[17px] font-medium text-[#111] leading-[22px]">*Dimetric</span>
    </div>
  );
}

function DocTitle() {
  const btn = 'h-[23px] border border-[#5f7d9c] rounded-[2px] bg-[#9cb6d2] flex items-center justify-center';
  return (
    <div className="h-[31px] shrink-0 flex items-center bg-linear-to-b from-[#92adcb] to-[#b9d3ec] text-[#15181d] text-[15px] pl-[7px] relative">
      <PartIcon s={20} />
      <span className="ml-[3px]">Quad 2 Current</span>
      <div className="ml-auto flex items-center pr-[5px] gap-[1px]">
        <div className={`${btn} w-[39px] mr-[1px]`}>
          <div className="w-[10px] h-[12px] bg-white border border-[#333] flex">
            <div className="w-[3px] border-r border-[#333]" />
          </div>
        </div>
        <div className={`${btn} w-[38px]`}>
          <div className="w-[10px] h-[12px] bg-white border border-[#333] flex justify-end">
            <div className="w-[3px] border-l border-[#333]" />
          </div>
        </div>
        <div className={`${btn} w-[36px]`}>
          <div className="w-[15px] h-[5px] bg-[#f2f4f6] border border-[#4a5460]" />
        </div>
        <div className={`${btn} w-[41px] ml-[1px]`}>
          <div className="w-[13px] h-[12px] border-2 border-[#f2f4f6] outline-1 outline-[#4a5460]" />
        </div>
        <div className="h-[23px] w-[41px] ml-[2px] border border-[#7a2a1c] rounded-[2px] bg-linear-to-b from-[#d8705c] to-[#b83a22] flex items-center justify-center">
          <Svg s={15}><path d="M3 3L17 17M17 3L3 17" stroke="#f4f4f4" strokeWidth="4.500" /></Svg>
        </div>
      </div>
    </div>
  );
}

function BottomTabs() {
  const nav = ['M6 4V16M15 4L8 10L15 16Z', 'M14 4L6 10L14 16Z', 'M6 4L14 10L6 16Z', 'M14 4V16M5 4L12 10L5 16Z'];
  return (
    <div className="h-[21px] shrink-0 flex bg-[#e2e5ea] border-t border-t-[#1c1e22] text-[15.5px] text-[#1d2026]">
      <div className="ml-[6px] flex h-[19px]">
        {nav.map((d) => (
          <div key={d} className="w-[20px] h-[19px] bg-[#a5a9b6] border border-[#8a8e9b] flex items-center justify-center">
            <Svg s={14}><path d={d} fill="#8a8e9b" stroke="#7a7e8b" /></Svg>
          </div>
        ))}
      </div>
      <div className="ml-[4px] w-[73px] h-[19px] bg-[#dfe3ea] border-x border-b border-[#50535b] flex items-center justify-center font-bold text-[16px]">
        Model
      </div>
      <div className="w-[88px] h-[17px] bg-[#b9bdc9] border-r border-b border-[#50535b] flex items-center justify-center">
        3D Views
      </div>
      <div className="w-[143px] h-[17px] bg-[#b9bdc9] border-r border-b border-[#50535b] flex items-center justify-center tracking-[0.3px]">
        Motion Study 1
      </div>
    </div>
  );
}

function DocWindow() {
  return (
    <div className="w-[1844px] h-[811px] shrink-0 flex flex-col bg-[#cfdff0] border-t border-t-[#eef3f8] border-r border-r-[#3aaed8] rounded-tr-[5px] relative">
      <DocTitle />
      <div className="h-[755px] shrink-0 flex pl-[4px]">
        <FeaturePanel />
        <Viewport />
      </div>
      <BottomTabs />
      <div className="h-[2px] shrink-0 bg-[#3fb6d8]" />
      <div className="h-px shrink-0 bg-black" />
      {/* panel grip */}
      <div className="absolute left-[257px] top-[390px] w-[9px] h-[38px] bg-[#e2e5ea] border border-l-0 border-black flex flex-col items-center justify-center gap-[5px]">
        {[0, 1, 2].map((i) => (
          <div key={i} className="w-0 h-0 border-y-[3px] border-r-[3px] border-y-transparent border-r-[#444]" />
        ))}
      </div>
    </div>
  );
}

function TaskPane() {
  const items = [
    <Svg key="h"><path d="M2 10L10 2L18 10H16V18H4V10Z" fill="#f6dc7a" stroke="#6b5507" strokeWidth="1.3" /><rect x="9" y="11" width="4" height="7" fill="#c9971a" stroke="#6b5507" /><rect x="14" y="3" width="2" height="4" fill="#c01818" /></Svg>,
    <Svg key="b"><rect x="1" y="11" width="5" height="8" fill="#2fa32f" /><rect x="6" y="8" width="4" height="11" fill="#e0c020" stroke="#6b5507" /><rect x="10" y="6" width="4" height="13" fill="#c01818" /><rect x="14" y="1" width="5" height="18" fill="#4f7fc8" stroke="#14406e" /></Svg>,
    <Svg key="f"><path d="M1 4H8L10 6H16V9H5L1 18ZM5 9H19L15 18H1Z" fill="#f6d774" stroke="#8a6508" /></Svg>,
    <Svg key="v"><rect x="2" y="1" width="17" height="13" fill="#dfe4ee" stroke="#3a4a78" /><path d="M4 4H9V7H4ZM12 4H17M12 7H17M12 10H17M4 10H9" stroke="#d09a20" fill="none" /><path d="M2 17H11M8 14L12 17L8 20" stroke="#1c1cc0" strokeWidth="2" fill="none" /></Svg>,
    <Ball key="a" s={20} />,
    <ClipHand key="c" s={20} />,
  ];
  return (
    <div className="flex-1 flex flex-col items-end pt-[37px]">
      {items.map((it, i) => (
        <div key={i} className={i === 0 ? 'w-[24px] h-[24px] bg-[#dcdee2] border-l border-y border-[#15171b] flex items-center justify-center' : 'w-[24px] h-[24px] bg-[#b4b6bb] border-l border-b border-[#15171b] flex items-center justify-center'}>
          {it}
        </div>
      ))}
    </div>
  );
}

function StatusBar() {
  return (
    <div className="h-[22px] shrink-0 flex items-center bg-[#d8dade] text-[15px] text-[#20232a] pl-[2px] border-t border-t-[#eceef0]">
      <span className="whitespace-nowrap">SOLIDWORKS Education Edition - Instructional Use Only</span>
      <div className="ml-auto flex items-center">
        <span className="mr-[31px]">IPS</span>
        <div className="w-0 h-0 border-x-[4px] border-b-[4px] border-x-transparent border-b-[#444]" />
        <div className="ml-[15px] w-[13px] h-[13px] bg-[#d8e6f4] border border-[#1a4a9c] flex items-center justify-center text-[12px] leading-none font-bold text-[#1aa01a]">
          ?
        </div>
        <div className="ml-[58px] mr-[6px]">
          <Svg s={16}><path d="M1 11L11 2L19 1L19 9L9 19Z" fill="#f2c62e" stroke="#9b6c06" /><circle cx="15" cy="5" r="1.500" fill="#fff" /></Svg>
        </div>
      </div>
    </div>
  );
}

function TaskSlot({ children, bar, active }: { children: ReactNode; bar?: boolean; active?: boolean }) {
  return (
    <div className={active ? 'w-[62px] h-[50px] relative flex items-center justify-center bg-[#353a3d]' : 'w-[62px] h-[50px] relative flex items-center justify-center'}>
      {children}
      {bar && <div className={active ? 'absolute bottom-0 inset-x-0 h-[3px] bg-[#a8e8f4]' : 'absolute bottom-0 inset-x-[6px] h-[3px] bg-[#a8e8f4]'} />}
    </div>
  );
}

function Taskbar() {
  return (
    <div className="h-[50px] shrink-0 flex bg-[#020a0e] text-white">
      <div className="w-[60px] flex items-center justify-center">
        <FaWindows className="w-[20px] h-[20px]" />
      </div>
      <div className="w-[430px] bg-[#333333] flex items-center pl-[11px]">
        <div className="w-[28px] h-[28px] rounded-full border-[4px] border-[#e8e8e8]" />
        <span className="ml-[11px] text-[17.3px] text-[#999] font-['Open_Sans',sans-serif] whitespace-nowrap">I’m Cortana. Ask me anything.</span>
      </div>
      <TaskSlot>
        <svg width="24" height="18" viewBox="0 0 24 18">
          <path d="M6.500 0.500H17.500V17.500H6.500ZM3 3H0.500V15H3M21 3H23.500V15H21" fill="none" stroke="#fff" />
        </svg>
      </TaskSlot>
      <TaskSlot>
        <FaEdge className="w-[25px] h-[30px] text-[#0a78d4]" />
      </TaskSlot>
      <TaskSlot bar>
        <svg width="28" height="26" viewBox="0 0 28 26">
          <path d="M0 2H11L13 5H28V26H0Z" fill="#f5d76e" />
          <path d="M0 5H28V8H0Z" fill="#e8b93c" />
          <path d="M5 2H9V4H5Z" fill="#fff" />
          <path d="M8 26V17H20V26H16V20H12V26Z" fill="#27b4ee" />
        </svg>
      </TaskSlot>
      <TaskSlot>
        <svg width="26" height="32" viewBox="0 0 26 32">
          <path d="M8 8V5Q8 1 13 1Q18 1 18 5V8" fill="none" stroke="#fff" strokeWidth="1.5" />
          <path d="M1 8H25V32L1 28Z" fill="#fff" />
          <path d="M8 14H12V18H8ZM14 14H18V18H14ZM8 20H12V24H8ZM14 20H18V24H14Z" fill="#111" />
        </svg>
      </TaskSlot>
      <TaskSlot>
        <svg width="28" height="30" viewBox="0 0 28 30">
          <ellipse cx="14" cy="15" rx="14" ry="15" fill="#dfe5e8" />
          <path d="M1 14Q10 2 20 6L24 10Q12 6 5 22Z" fill="#3f9a48" />
          <path d="M10 20Q18 10 28 15Q22 24 14 27Q20 18 14 18Z" fill="#2a6aa8" />
          <path d="M4 24Q14 30 22 25L14 30Z" fill="#8a9298" />
        </svg>
      </TaskSlot>
      <TaskSlot bar>
        <svg width="28" height="28" viewBox="0 0 28 28">
          <path d="M14 14L2 7A14 14 0 0 1 26 7Z" fill="#db3a2f" />
          <path d="M14 14L26 7A14 14 0 0 1 14 28Z" fill="#f4c20d" />
          <path d="M14 14L14 28A14 14 0 0 1 2 7Z" fill="#2f9e44" />
          <circle cx="14" cy="14" r="6.500" fill="#fff" />
          <circle cx="14" cy="14" r="5" fill="#4a86e8" />
        </svg>
      </TaskSlot>
      <TaskSlot><SwIcon /></TaskSlot>
      <TaskSlot bar>
        <div className="relative w-[28px] h-[32px]">
          <div className="absolute left-[8px] top-[4px] w-[20px] h-[24px] bg-white flex flex-col justify-around items-end py-[2px] pr-[2px]">
            {[0, 1, 2, 3].map((i) => (
              <div key={i} className="w-[8px] h-[2px] bg-[#2a5699]" />
            ))}
          </div>
          <div className="absolute left-0 top-0 w-[19px] h-[32px] bg-[#2a5699] flex items-center justify-center text-[14px] font-bold font-['Liberation_Sans',sans-serif]">
            W
          </div>
        </div>
      </TaskSlot>
      <TaskSlot bar active><SwIcon /></TaskSlot>
      <div className="ml-auto flex items-center h-[50px]">
        <div className="w-[24px] flex justify-center">
          <svg width="17" height="9" viewBox="0 0 17 9"><path d="M0.500 8.500L8.500 0.500L16.500 8.500" fill="none" stroke="#fff" /></svg>
        </div>
        <div className="w-[34px] flex justify-center">
          <svg width="22" height="14" viewBox="0 0 22 14">
            <path d="M5.500 2.500H20.500V11.500H5.500Z" fill="none" stroke="#fff" />
            <path d="M7 4H12V10H7Z" fill="#fff" />
            <path d="M21 5V9" stroke="#fff" strokeWidth="2" />
            <path d="M0 5H4V9H0ZM1 2V5M3 2V5M2 9V13" fill="#fff" stroke="#fff" />
          </svg>
        </div>
        <div className="w-[30px] flex justify-center">
          <svg width="16" height="16" viewBox="0 0 16 16">
            <path d="M1 15A14 14 0 0 1 15 1M4 15A11 11 0 0 1 15 4M7 15A8 8 0 0 1 15 7" fill="none" stroke="#bfc4c6" />
            <rect x="11" y="11" width="4" height="4" fill="#fff" />
          </svg>
        </div>
        <div className="w-[24px] flex justify-center">
          <svg width="19" height="14" viewBox="0 0 19 14">
            <path d="M0.500 4.500H3.500L7.500 1V13L3.500 9.500H0.500Z" fill="none" stroke="#fff" />
            <path d="M11 4L17 10M17 4L11 10" stroke="#fff" />
          </svg>
        </div>
        <div className="w-[40px] flex justify-center">
          <svg width="20" height="20" viewBox="0 0 20 20">
            <path d="M0 0H20V16H13L10 19L7 16H0Z" fill="#fff" />
            <path d="M4 5H16M4 8H16M4 11H12" stroke="#020a0e" />
          </svg>
        </div>
        <div className="w-[30px] flex justify-center">
          <svg width="29" height="17" viewBox="0 0 29 17">
            <rect x="0.500" y="0.500" width="28" height="16" rx="1" fill="none" stroke="#fff" />
            <path d="M4 5H25M4 8H25" stroke="#fff" strokeDasharray="1.500 1" />
            <path d="M4 12H25" stroke="#fff" />
          </svg>
        </div>
        <div className="w-[93px] -mt-[2px] text-center text-[14.5px] leading-[22px] text-[#e6e6e6] font-['Open_Sans',sans-serif]">
          <div>2:08 PM</div>
          <div>4/28/2016</div>
        </div>
        <div className="w-[5px] h-[50px] border-l border-l-[#555]" />
      </div>
    </div>
  );
}

export default function App() {
  return (
    <div className="w-[1920px] h-[1080px] flex flex-col overflow-hidden text-[15px] font-['Roboto',sans-serif]">
      <TitleBar />
      <ViewBar />
      <Ribbon />
      <div className="h-[835px] shrink-0 flex flex-col bg-linear-to-b from-[#36465a] via-[#36465a] to-[#667080]">
        <CommandTabs />
        <div className="flex">
          <DocWindow />
          <TaskPane />
        </div>
      </div>
      <StatusBar />
      <Taskbar />
    </div>
  );
}
